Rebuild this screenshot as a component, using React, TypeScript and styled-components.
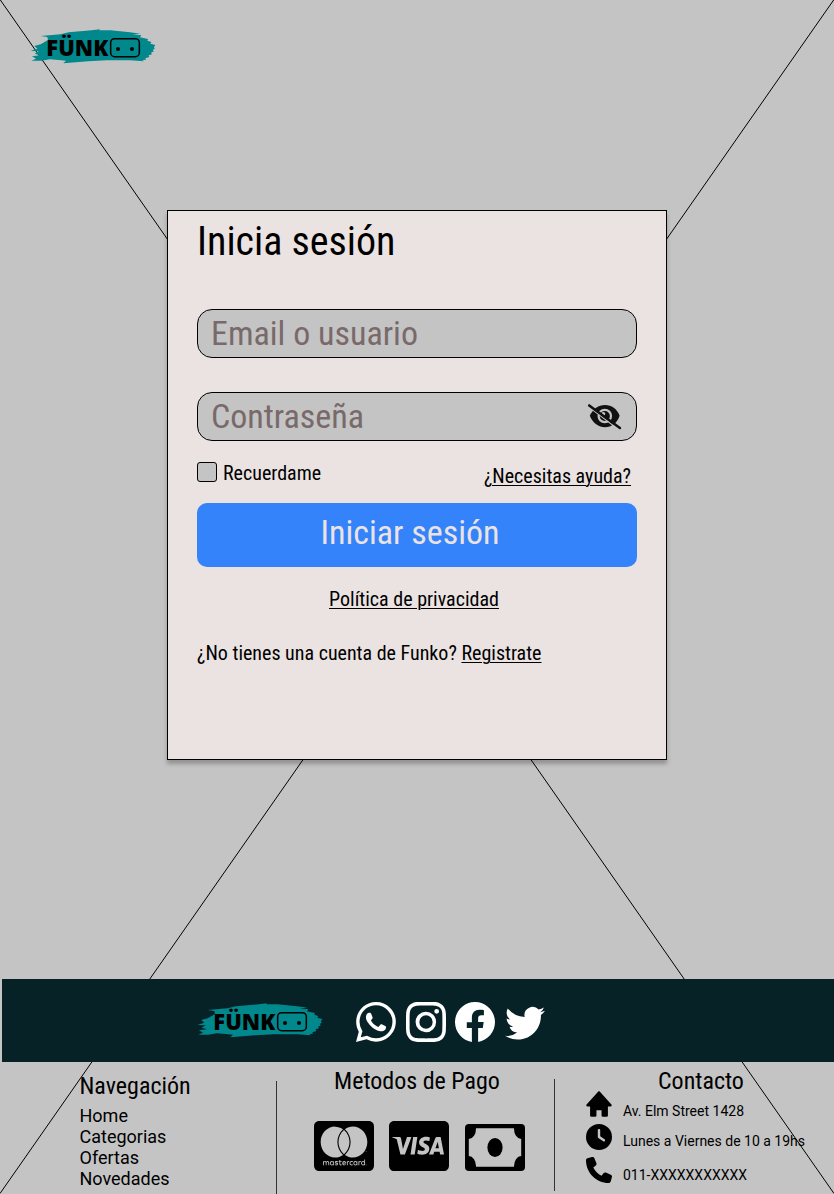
import React from "react";
import styled, { createGlobalStyle } from "styled-components";
import { BsWhatsapp, BsInstagram, BsFacebook, BsTwitter } from "react-icons/bs";
import { FaCcVisa, FaCcMastercard } from "react-icons/fa";
import { FaClock, FaPhone } from "react-icons/fa6";
import { BiSolidHome } from "react-icons/bi";

const GlobalStyle = createGlobalStyle`
  * { box-sizing: border-box; }
  body { margin: 0; background: #c4c4c4; color: #000; font-family: "Roboto Condensed", Roboto, sans-serif; }
  svg { display: block; flex: none; }
  a, u { color: inherit; text-decoration: underline; text-decoration-thickness: 1px; text-underline-offset: 2px; }
`;

const Page = styled.div`
  position: relative;
  display: flex;
  flex-direction: column;
  width: 834px;
  height: 1194px;
  overflow: hidden;
`;

const Backdrop = styled.svg`
  position: absolute;
  inset: 0;
`;

const Header = styled.header`
  position: relative;
  height: 210px;
  padding: 28px 0 0 30px;
`;

const Card = styled.main`
  position: relative;
  display: flex;
  flex-direction: column;
  width: 500px;
  height: 550px;
  margin: 0 auto;
  padding: 7px 29px 0;
  background: #ebe3e1;
  border: 1px solid #000;
  box-shadow: 0 4px 4px rgba(0, 0, 0, 0.25);
`;

const Title = styled.h1`
  margin: 0 0 44px;
  font-size: 40px;
  line-height: 47px;
  font-weight: 400;
`;

const Field = styled.div`
  display: flex;
  align-items: center;
  justify-content: space-between;
  height: 49px;
  margin-bottom: 34px;
  padding: 0 14px 0 13px;
  border: 1px solid #000;
  border-radius: 15px;
  background: #c4c4c4;
  color: #786a6a;
  font-size: 34px;
  line-height: 47px;
`;

const Options = styled.div`
  display: flex;
  justify-content: space-between;
  height: 62px;
  margin-top: -34px;
  padding: 21px 6px 0 0;
  font-size: 20px;
  line-height: 23px;
`;

const Remember = styled.label`
  display: flex;
  gap: 6px;
`;

const CheckBox = styled.span`
  width: 20px;
  height: 20px;
  border: 1px solid #000;
  border-radius: 3px;
  background: #c4c4c4;
`;

const HelpLink = styled.a`
  margin-top: 3px;
`;

const Submit = styled.button`
  height: 64px;
  padding: 0 14px 7px 0;
  border: 0;
  border-radius: 10px;
  background: #3483fa;
  color: #ebe3e1;
  font: 400 34px "Roboto Condensed", Roboto, sans-serif;
`;

const PrivacyLink = styled.a`
  align-self: center;
  margin: 21px 6px 31px 0;
  font-size: 20px;
  line-height: 23px;
`;

const SignUp = styled.p`
  margin: 0;
  font-size: 20px;
  line-height: 23px;
`;

const SocialBar = styled.section`
  position: relative;
  display: flex;
  align-items: flex-start;
  height: 83px;
  margin: 219px 0 0 2px;
  padding: 23px 0 0 195px;
  background: #072227;
  color: #fff;
`;

const SocialLinks = styled.div`
  display: flex;
  gap: 9.6px;
  margin-left: 33px;
  font-size: 40px;
`;

const Footer = styled.footer`
  position: relative;
  display: grid;
  grid-template-columns: 276px 279px 279px;
  height: 132px;
`;

const Column = styled.section<{ $top: number; $left?: number }>`
  display: flex;
  flex-direction: column;
  padding: ${(p) => p.$top}px 0 0 ${(p) => p.$left ?? 0}px;
`;

const PaymentSection = styled.section`
  display: grid;
  grid-template-columns: 1px 277px 1px;
`;

const Divider = styled.div<{ $top: number; $height: number }>`
  height: ${(p) => p.$height}px;
  margin-top: ${(p) => p.$top}px;
  background: #333;
`;

const ColumnTitle = styled.h2<{ $shift?: number }>`
  margin: 0;
  padding-left: ${(p) => p.$shift ?? 0}px;
  font-size: 24px;
  line-height: 28px;
  font-weight: 400;
`;

const NavList = styled.ul`
  margin: 5px 0 0;
  padding: 0;
  list-style: none;
  font: 18px/21px Roboto, sans-serif;
`;

const Payments = styled.div`
  display: flex;
  align-items: flex-end;
  gap: 15.4px;
  margin: 26px 0 0 37px;
`;

const MastercardIcon = styled(FaCcMastercard)`
  width: 60px;
  height: 50px;
`;

const VisaIcon = styled(FaCcVisa)`
  width: 60px;
  height: 50px;
`;

const HomeIcon = styled(BiSolidHome)`
  width: 26px;
  height: 26px;
`;

const ContactRow = styled.div<{ $gap: number; $drop: number }>`
  display: flex;
  gap: 11px;
  height: 26px;
  margin-top: ${(p) => p.$gap}px;
  font: 14px/16px Roboto, sans-serif;
  white-space: nowrap;

  span {
    margin-top: ${(p) => p.$drop}px;
  }
`;

const LogoText = styled.text`
  font: 800 67px "Open Sans", sans-serif;
`;

function Logo() {
  return (
    <svg width="126" height="37" viewBox="30 24 378 111">
      <path
        fill="#00888c"
        d="M62 48 L122 43 L146 37 L215 31 L240 28 L238 31 L272 31 L330 37 L362 41 L338 43 L364 46 L360 52 L384 57 L382 62 L394 66 L391 71 L406 75 L402 81 L404 86 L398 90 L402 94 L393 98 L396 103 L386 106 L388 111 L376 115 L378 119 L367 120 L372 124 L330 121 L260 121 L205 124 L130 130 L138 122 L124 121 L90 118 L64 122 L34 122 L48 116 L36 109 L60 106 L44 101 L56 94 L31 93 L52 86 L43 78 L62 73 L84 60 L82 51 Z"
      />
      <LogoText x="79" y="108" textLength="186" lengthAdjust="spacingAndGlyphs">
        FÜNK
      </LogoText>
      <rect x="272" y="56" width="86" height="54" rx="12" fill="none" stroke="#000" strokeWidth="4.5" />
      <circle cx="294" cy="87" r="6" />
      <circle cx="336" cy="87" r="6" />
    </svg>
  );
}

function HiddenIcon() {
  return (
    <svg width="34" height="27" viewBox="0 0 34 27" fill="#111">
      <path d="M1.8 12.8 C5 5.8 10.5 2 17 2 C23.5 2 29 5.8 31.6 12.8 C29 20.4 23.5 24.3 17 24.3 C10.5 24.3 5 20.4 1.8 12.8 Z" />
      <circle cx="16.8" cy="13" r="6.2" fill="none" stroke="#c4c4c4" strokeWidth="2.2" />
      <circle cx="15.4" cy="10.8" r="1.9" fill="#c4c4c4" />
      <path d="M-1 2.6 L31 27" stroke="#c4c4c4" strokeWidth="1.2" />
      <path d="M1.2 2.4 L31.9 25" stroke="#111" strokeWidth="2.5" strokeLinecap="round" />
    </svg>
  );
}

function CashIcon() {
  return (
    <svg width="60" height="47" viewBox="0 0 60 47">
      <rect width="60" height="47" rx="4" />
      <path
        fill="#c4c4c4"
        d="M11 4.2 H49 A7.3 10.3 0 0 0 56.2 15 V32 A7.3 10.3 0 0 0 49 42.8 H11 A7.3 10.3 0 0 0 3.8 32 V15 A7.3 10.3 0 0 0 11 4.2 Z"
      />
      <ellipse cx="30" cy="23.5" rx="7.6" ry="9.6" />
    </svg>
  );
}

export default function App() {
  return (
    <Page>
      <GlobalStyle />
      <Backdrop width="834" height="1194" stroke="#000" strokeWidth="1">
        <line x1="0" y1="-0.5" x2="834" y2="1193.5" />
        <line x1="834" y1="-0.5" x2="0" y2="1193.5" />
      </Backdrop>
      <Header>
        <Logo />
      </Header>
      <Card>
        <Title>Inicia sesión</Title>
        <Field>Email o usuario</Field>
        <Field>
          Contraseña
          <HiddenIcon />
        </Field>
        <Options>
          <Remember>
            <CheckBox />
            Recuerdame
          </Remember>
          <HelpLink>¿Necesitas ayuda?</HelpLink>
        </Options>
        <Submit>Iniciar sesión</Submit>
        <PrivacyLink>Política de privacidad</PrivacyLink>
        <SignUp>
          ¿No tienes una cuenta de Funko? <u>Registrate</u>
        </SignUp>
      </Card>
      <SocialBar>
        <Logo />
        <SocialLinks>
          <BsWhatsapp />
          <BsInstagram />
          <BsFacebook />
          <BsTwitter />
        </SocialLinks>
      </SocialBar>
      <Footer>
        <Column $top={10} $left={79.5}>
          <ColumnTitle>Navegación</ColumnTitle>
          <NavList>
            <li>Home</li>
            <li>Categorias</li>
            <li>Ofertas</li>
            <li>Novedades</li>
          </NavList>
        </Column>
        <PaymentSection>
          <Divider $top={19} $height={113} />
          <Column $top={5}>
            <ColumnTitle $shift={57}>Metodos de Pago</ColumnTitle>
            <Payments>
              <MastercardIcon viewBox="0 32 576 448" preserveAspectRatio="none" />
              <VisaIcon viewBox="0 32 576 448" preserveAspectRatio="none" />
              <CashIcon />
            </Payments>
          </Column>
          <Divider $top={17} $height={112} />
        </PaymentSection>
        <Column $top={5} $left={31}>
          <ColumnTitle $shift={72}>Contacto</ColumnTitle>
          <ContactRow $gap={-4} $drop={12}>
            <HomeIcon viewBox="1.8 2 20.4 20" />
            <span>Av. Elm Street 1428</span>
          </ContactRow>
          <ContactRow $gap={7} $drop={9}>
            <FaClock size={26} />
            <span>Lunes a Viernes de 10 a 19hs</span>
          </ContactRow>
          <ContactRow $gap={7} $drop={10}>
            <FaPhone size={26} />
            <span>011-XXXXXXXXXXX</span>
          </ContactRow>
        </Column>
      </Footer>
    </Page>
  );
}
